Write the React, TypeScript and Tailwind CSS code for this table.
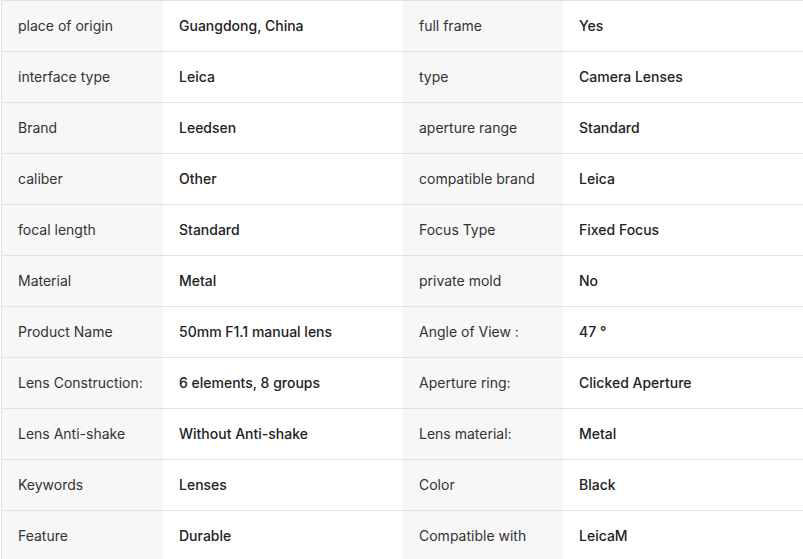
const rows: [string, string, string, string][] = [
  ["place of origin", "Guangdong, China", "full frame", "Yes"],
  ["interface type", "Leica", "type", "Camera Lenses"],
  ["Brand", "Leedsen", "aperture range", "Standard"],
  ["caliber", "Other", "compatible brand", "Leica"],
  ["focal length", "Standard", "Focus Type", "Fixed Focus"],
  ["Material", "Metal", "private mold", "No"],
  ["Product Name", "50mm F1.1 manual lens", "Angle of View :", "47 °"],
  ["Lens Construction:", "6 elements, 8 groups", "Aperture ring:", "Clicked Aperture"],
  ["Lens Anti-shake", "Without Anti-shake", "Lens material:", "Metal"],
  ["Keywords", "Lenses", "Color", "Black"],
  ["Feature", "Durable", "Compatible with", "LeicaM"],
];

export default function App() {
  return (
    <div className="h-[559px] w-[803px] overflow-hidden bg-white font-['Inter',sans-serif] text-[14px]">
      <div className="ml-px w-[802px] border-l border-t border-[#e2e2e2]">
        {rows.map((r, i) => (
          <div key={i} className="grid h-[51px] grid-cols-[161px_240px_160px_241px] border-b border-[#e2e2e2]">
            <div className="flex items-center bg-[#f7f7f7] px-4 pb-[2px] text-[#333]">{r[0]}</div>
            <div className="flex items-center px-4 pb-[2px] font-medium text-[#222]">{r[1]}</div>
            <div className="flex items-center bg-[#f7f7f7] px-4 pb-[2px] text-[#333]">{r[2]}</div>
            <div className="flex items-center px-4 pb-[2px] font-medium text-[#222]">{r[3]}</div>
          </div>
        ))}
      </div>
    </div>
  );
}
